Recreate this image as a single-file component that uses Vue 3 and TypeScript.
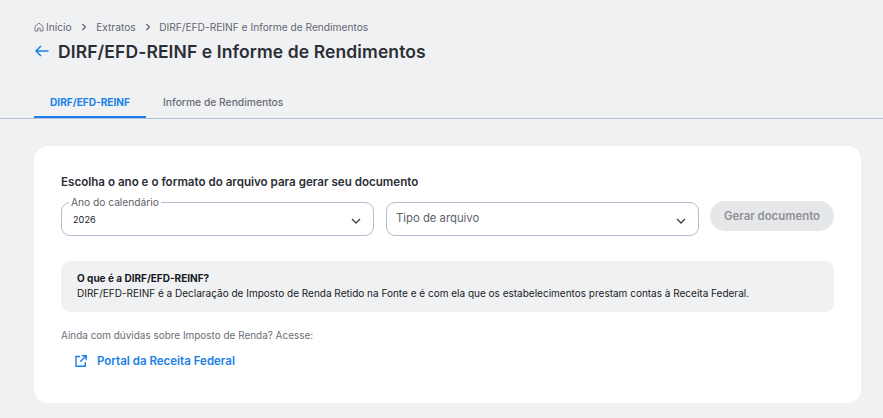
<script setup lang="ts">
const crumbs: string[] = ['Extratos', 'DIRF/EFD-REINF e Informe de Rendimentos']
</script>

<template>
  <div class="page">
    <header class="head">
      <nav class="crumbs">
        <svg class="home" width="10" height="10" viewBox="0 0 10 10" fill="none" stroke="#6a6d78" stroke-width="0.9">
          <path d="M1 4.4 5 1l4 3.4V9H6.2V6.2H3.8V9H1z" stroke-linejoin="round" />
        </svg>
        <span class="crumb first">Início</span>
        <template v-for="c in crumbs" :key="c">
          <svg class="sep" width="6" height="8" viewBox="0 0 6 8" fill="none" stroke="#5f626c" stroke-width="1.1">
            <path d="M1.3 1 4.5 4 1.3 7" />
          </svg>
          <span class="crumb">{{ c }}</span>
        </template>
      </nav>
      <div class="title-row">
        <svg width="14" height="12" viewBox="0 0 14 12" fill="none" stroke="#1a7fe8" stroke-width="1.5">
          <path d="M13.5 6H1M6 1 1 6l5 5" />
        </svg>
        <h1>DIRF/EFD-REINF e Informe de Rendimentos</h1>
      </div>
    </header>

    <div class="tabs">
      <div class="tab active">DIRF/EFD-REINF</div>
      <div class="tab">Informe de Rendimentos</div>
    </div>

    <main class="card">
      <h2>Escolha o ano e o formato do arquivo para gerar seu documento</h2>
      <div class="form">
        <div class="field">
          <span class="legend">Ano do calendário</span>
          <span class="value">2026</span>
          <svg class="chev" width="10" height="6" viewBox="0 0 10 6" fill="none" stroke="#3b3e47" stroke-width="1.3">
            <path d="M1 1l4 4 4-4" />
          </svg>
        </div>
        <div class="field">
          <span class="placeholder">Tipo de arquivo</span>
          <svg class="chev" width="10" height="6" viewBox="0 0 10 6" fill="none" stroke="#3b3e47" stroke-width="1.3">
            <path d="M1 1l4 4 4-4" />
          </svg>
        </div>
        <button class="gen" type="button">Gerar documento</button>
      </div>

      <section class="info">
        <strong>O que é a DIRF/EFD-REINF?</strong>
        <p>DIRF/EFD-REINF é a Declaração de Imposto de Renda Retido na Fonte e é com ela que os estabelecimentos prestam contas à Receita Federal.</p>
      </section>

      <p class="help">Ainda com dúvidas sobre Imposto de Renda? Acesse:</p>
      <a class="portal">
        <svg width="12" height="12" viewBox="0 0 12 12" fill="none" stroke="#1a7fe8" stroke-width="1.4">
          <path d="M5 1.5H1v9.8h9.3V7M6.8.8h4.4v4.4M11 1 5.2 6.8" />
        </svg>
        <span>Portal da Receita Federal</span>
      </a>
    </main>
  </div>
</template>

<style>
html, body { margin: 0; background: #f0f1f3; }
</style>

<style scoped>
.page {
  width: 883px;
  height: 418px;
  overflow: hidden;
  background: #f0f1f3;
  font-family: Inter, "Noto Sans", sans-serif;
  box-sizing: border-box;
}
.head { padding: 20px 34px 0; height: 78px; box-sizing: border-box; }
.crumbs { display: flex; align-items: center; height: 14px; font-size: 10.2px; color: #63666f; }
.home { margin-right: 2px; }
.sep { margin: 0 9px 0 9.5px; }
.sep:last-of-type { margin-right: 8px; }
.title-row { display: flex; align-items: center; gap: 9px; margin-top: 3px; height: 28px; padding-left: 1px; }
h1 { margin: 0; font-size: 17.5px; font-weight: 600; color: #2b2e36; white-space: nowrap; letter-spacing: 0.1px; }
.tabs { display: flex; height: 40px; padding-left: 34px; border-bottom: 1px solid #b9c1d6; box-sizing: content-box; }
.tab {
  height: 40px;
  box-sizing: border-box;
  padding: 8px 17px 0;
  display: flex;
  align-items: center;
  font-size: 10.3px;
  font-weight: 500;
  color: #6a6d78;
  white-space: nowrap;
}
.tab.active { color: #1a7fe8; font-size: 10.1px; font-weight: 700; border-bottom: 2px solid #1a7fe8; width: 112px; justify-content: center; padding: 10px 0 0; }
.card {
  margin: 27px 22px 0 34px;
  height: 257px;
  background: #fff;
  border-radius: 14px;
  padding: 29px 27px 0;
  box-sizing: border-box;
}
h2 { margin: 0; font-size: 11.6px; line-height: 14px; font-weight: 600; color: #2b2e36; white-space: nowrap; }
.form { display: flex; align-items: flex-start; gap: 12px; margin-top: 13px; }
.field {
  position: relative;
  width: 313px;
  height: 34px;
  box-sizing: border-box;
  border: 1px solid #b4bcce;
  border-radius: 9px;
  display: flex;
  align-items: center;
  padding: 0 11px;
  flex: none;
}
.legend {
  position: absolute;
  left: 7px;
  top: -7px;
  padding: 0 2px;
  background: #fff;
  font-size: 10.2px;
  line-height: 12px;
  color: #5d606a;
}
.value { font-size: 9.2px; font-weight: 400; color: #16181d; padding-top: 1px; }
.placeholder { font-size: 11.3px; color: #5d606a; margin-left: -2px; margin-top: -2px; }
.chev { position: absolute; right: 12px; top: 15px; }
.gen {
  width: 124px;
  height: 30px;
  margin-left: -1px;
  margin-top: -1px;
  border: 0;
  border-radius: 15px;
  background: #e6e7e8;
  color: #8e9096;
  font: 600 11.4px Inter, "Noto Sans", sans-serif;
  padding: 0;
}
.info {
  margin-top: 25px;
  width: 773px;
  height: 51px;
  box-sizing: border-box;
  border-radius: 9px;
  background: #f0f1f3;
  padding: 10px 16px 0;
  color: #17191e;
  font-size: 10px;
  line-height: 15px;
}
.info strong { display: block; font-weight: 700; }
.info p { margin: 0; white-space: nowrap; }
.help { margin: 16px 0 0; font-size: 9.95px; line-height: 14px; color: #6a6d78; white-space: nowrap; }
.portal {
  display: flex;
  align-items: center;
  gap: 10px;
  margin-top: 12px;
  padding-left: 14px;
  color: #1a7fe8;
  font-size: 11.5px;
  font-weight: 600;
  line-height: 14px;
}
</style>
